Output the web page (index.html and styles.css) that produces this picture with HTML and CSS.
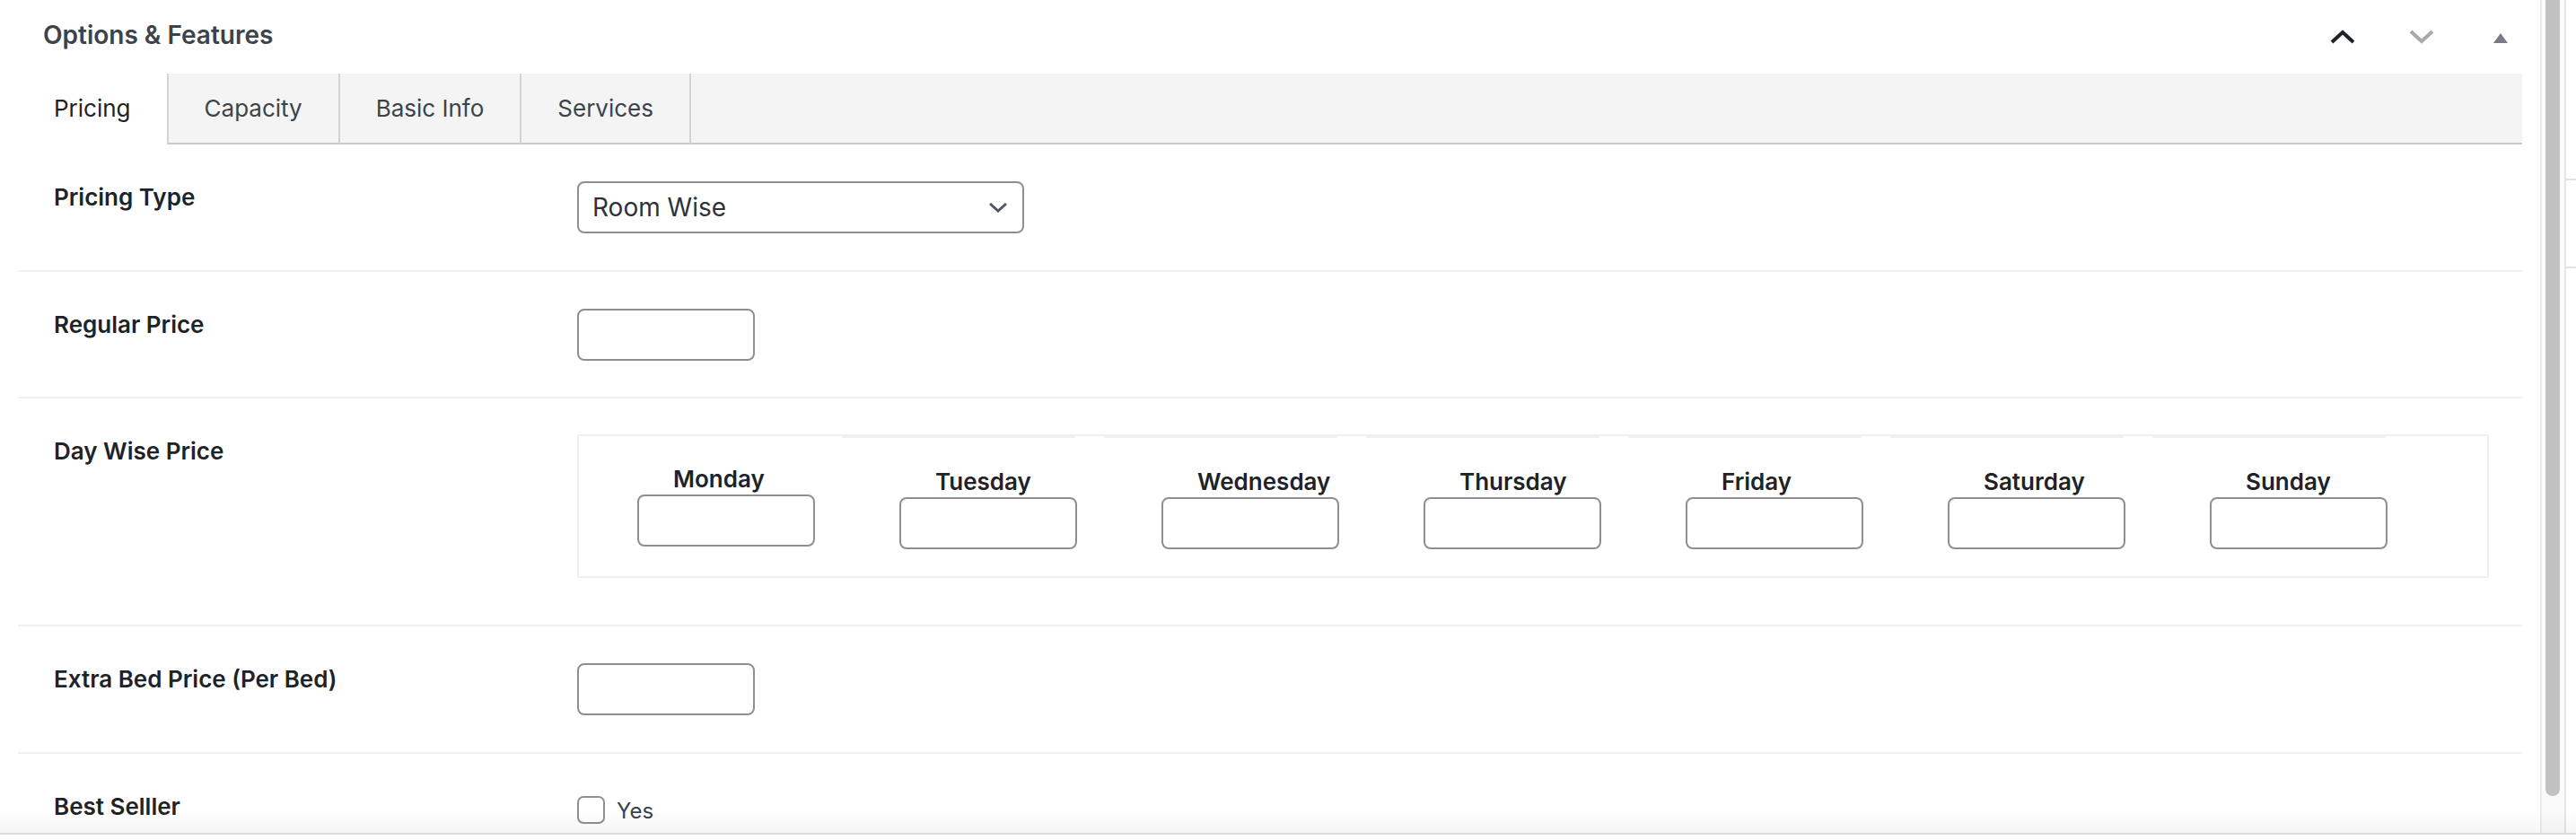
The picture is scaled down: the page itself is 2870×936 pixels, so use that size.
FILE: index.html
```html
<!DOCTYPE html>
<html lang="en">
<head>
<meta charset="utf-8">
<title>Options &amp; Features</title>
<link rel="stylesheet" href="styles.css">
</head>
<body>
<div class="frame">
  <div class="postbox">
    <div class="pb-header">
      <h2 class="pb-title">Options &amp; Features</h2>
      <div class="pb-actions">
        <button class="handle" type="button" aria-label="Move up">
          <svg width="28" height="16" viewBox="0 0 28 16"><polyline points="2,14 14,3 26,14" fill="none" stroke="#1d2327" stroke-width="4"/></svg>
        </button>
        <button class="handle" type="button" aria-label="Move down">
          <svg width="28" height="16" viewBox="0 0 28 16"><polyline points="2,2 14,13 26,2" fill="none" stroke="#a7aaad" stroke-width="4"/></svg>
        </button>
        <button class="handle handle-toggle" type="button" aria-label="Toggle panel">
          <svg width="16" height="11" viewBox="0 0 16 11"><polygon points="8,0 16,11 0,11" fill="#787c82"/></svg>
        </button>
      </div>
    </div>
    <div class="pb-inside">
      <ul class="tabs">
        <li class="tab active">Pricing</li>
        <li class="tab">Capacity</li>
        <li class="tab">Basic Info</li>
        <li class="tab">Services</li>
        <li class="tab-fill"></li>
      </ul>

      <div class="row">
        <div class="label">Pricing Type</div>
        <div class="field">
          <div class="select">
            <span>Room Wise</span>
            <svg width="22" height="12" viewBox="0 0 22 12"><polyline points="2,2 11,10 20,2" fill="none" stroke="#50575e" stroke-width="3"/></svg>
          </div>
        </div>
      </div>

      <div class="row">
        <div class="label">Regular Price</div>
        <div class="field"><input class="inp" type="text"></div>
      </div>

      <div class="row row-days">
        <div class="label">Day Wise Price</div>
        <div class="field">
          <div class="daybox">
            <div class="deco"><span></span><span></span><span></span><span></span><span></span><span></span></div>
            <div class="days">
              <div class="day first"><div class="day-label">Monday</div><input class="inp" type="text"></div>
              <div class="day"><div class="day-label">Tuesday</div><input class="inp" type="text"></div>
              <div class="day"><div class="day-label">Wednesday</div><input class="inp" type="text"></div>
              <div class="day"><div class="day-label">Thursday</div><input class="inp" type="text"></div>
              <div class="day"><div class="day-label">Friday</div><input class="inp" type="text"></div>
              <div class="day"><div class="day-label">Saturday</div><input class="inp" type="text"></div>
              <div class="day"><div class="day-label">Sunday</div><input class="inp" type="text"></div>
            </div>
          </div>
        </div>
      </div>

      <div class="row">
        <div class="label">Extra Bed Price (Per Bed)</div>
        <div class="field"><input class="inp" type="text"></div>
      </div>

      <div class="row row-check">
        <div class="label">Best Selller</div>
        <div class="field">
          <label class="check"><input class="cb" type="checkbox"><span>Yes</span></label>
        </div>
      </div>
    </div>
  </div>
  <div class="scrollbar"><div class="thumb"></div></div>
  <div class="side"><div class="side-line"></div><div class="side-line second"></div></div>
  <div class="fade"></div>
</div>
</body>
</html>
```

FILE: styles.css
```css
* { box-sizing: border-box; }

html, body {
  margin: 0;
  padding: 0;
  background: #ffffff;
  font-family: Inter, "Noto Sans", "Liberation Sans", sans-serif;
  color: #1d2327;
}

.frame {
  position: relative;
  display: flex;
  height: 930px;
  overflow: hidden;
  border-bottom: 2px solid #dcdcde;
}

.postbox {
  flex: none;
  width: 2830px;
  background: #ffffff;
}

.pb-header {
  display: flex;
  align-items: center;
  height: 82px;
}

.pb-title {
  flex: 1;
  margin: 0;
  padding: 0 0 4px 48px;
  font-size: 28px;
  font-weight: 600;
  color: #3c434a;
  line-height: 1.3;
}

.pb-actions {
  display: flex;
  height: 82px;
}

.handle {
  width: 88px;
  height: 82px;
  padding: 0;
  border: 0;
  background: transparent;
  display: flex;
  align-items: center;
  justify-content: center;
}

.handle-toggle svg { margin-top: 3px; }

.pb-inside {
  padding: 0 20px;
}

/* Tabs */
.tabs {
  list-style: none;
  margin: 0;
  padding: 0;
  display: flex;
  height: 79px;
}

.tab {
  display: flex;
  align-items: center;
  padding: 0 40px;
  font-size: 26px;
  color: #3c434a;
  background: #f4f4f4;
  border-left: 2px solid #d3d4d6;
  border-bottom: 2px solid #c9cacc;
}

.tab.active {
  background: #ffffff;
  color: #1d2327;
  border-left: 0;
  border-bottom-color: #ffffff;
}

.tab:nth-child(4) { border-right: 2px solid #d3d4d6; }

.tab-fill {
  flex: 1;
  background: #f4f4f4;
  border-bottom: 2px solid #c9cacc;
}

/* Rows */
.row {
  display: grid;
  grid-template-columns: 623px 1fr;
  align-items: start;
  padding: 41px 0 41px;
  border-bottom: 2px solid #f0f0f0;
}

.row:nth-of-type(2) { padding-bottom: 40px; }

.label {
  padding-left: 40px;
  margin-top: 1px;
  font-size: 26px;
  line-height: 34px;
  font-weight: 600;
  color: #1d2327;
}

.field {
  display: flex;
  align-items: flex-start;
}

.select {
  width: 498px;
  height: 58px;
  display: flex;
  align-items: center;
  justify-content: space-between;
  padding: 0 16px 0 15px;
  border: 2px solid #8c8f94;
  border-radius: 8px;
  font-size: 28px;
  color: #2c3338;
  background: #ffffff;
}

.inp {
  width: 198px;
  height: 58px;
  margin: 0;
  padding: 0 14px;
  border: 2px solid #8c8f94;
  border-radius: 8px;
  background: #ffffff;
  font: inherit;
  font-size: 26px;
}

/* Day wise */
.row-days { padding-bottom: 52px; }

.daybox {
  flex: 1;
  margin-top: -1px;
  margin-right: 37px;
  border: 2px solid #f0f0f0;
}

.deco {
  display: flex;
  gap: 32px;
  height: 2px;
  padding-left: 293px;
}

.deco span {
  width: 260px;
  height: 2px;
  background: #f0f0f0;
}

.days {
  display: flex;
  gap: 94px;
  padding: 32px 0 30px 65px;
}

.day {
  display: flex;
  flex-direction: column;
  width: 198px;
}

.day.first { margin-top: -3px; }

.day-label {
  padding-left: 40px;
  font-size: 26px;
  line-height: 34px;
  font-weight: 600;
  color: #1d2327;
  white-space: nowrap;
}

/* Checkbox */
.check {
  display: flex;
  align-items: center;
  gap: 13px;
  margin-top: 5px;
  font-size: 24px;
  color: #3c434a;
}

.cb {
  appearance: none;
  -webkit-appearance: none;
  width: 31px;
  height: 31px;
  margin: 0;
  border: 2px solid #8c8f94;
  border-radius: 7px;
  background: #ffffff;
}

.check span { margin-top: 3px; }

/* Scrollbar & side */
.scrollbar {
  flex: none;
  width: 29px;
  background: #fafafa;
  border-left: 2px solid #ececec;
  border-right: 2px solid #e6e6e6;
  padding-left: 4px;
}

.thumb {
  width: 16px;
  height: 887px;
  background: #c1c1c1;
  border-radius: 0 0 8px 8px;
}

.side {
  flex: 1;
  background: #ffffff;
  padding-top: 199px;
}

.side-line {
  height: 2px;
  background: #e2e2e2;
}

.side-line.second { margin-top: 96px; }

.fade {
  position: absolute;
  left: 0;
  right: 0;
  bottom: 0;
  height: 28px;
  background: linear-gradient(to bottom, rgba(0, 0, 0, 0), rgba(0, 0, 0, 0.035));
  pointer-events: none;
}
```
